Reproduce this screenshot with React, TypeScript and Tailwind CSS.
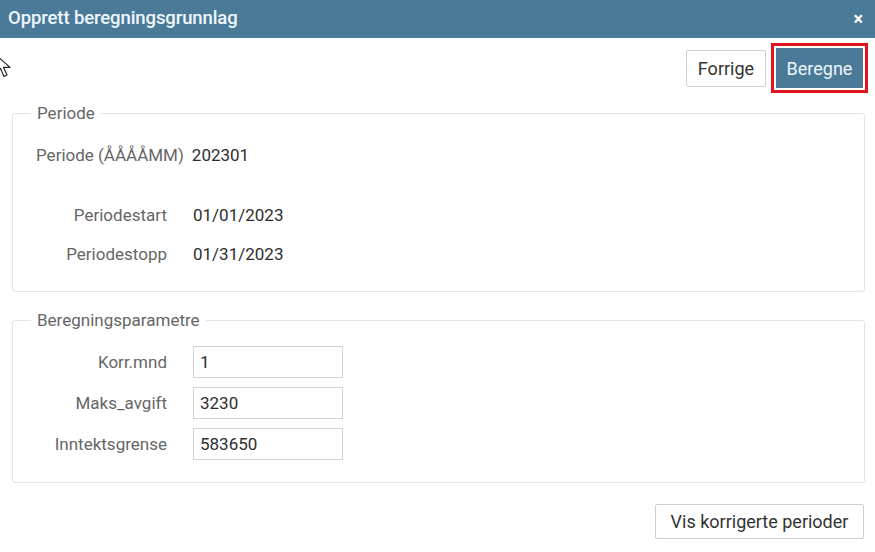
import React from "react";

const labelCls = "text-[17px] leading-[24px] text-[#666666]";
const valueCls = "text-[17px] leading-[24px] text-[#2e2e2e]";

function InputRow({ label, value }: { label: string; value: string }) {
  return (
    <div className="flex items-center">
      <div className={`w-[154px] text-right ${labelCls}`}>{label}</div>
      <div className="ml-[26px] w-[150px] h-[32px] border border-[#d4d4d4] bg-white flex items-center pl-[6px]">
        <span className={valueCls}>{value}</span>
      </div>
    </div>
  );
}

export default function App() {
  return (
    <div
      className="relative w-[875px] h-[552px] bg-white overflow-hidden"
      style={{ fontFamily: "Roboto, 'Liberation Sans', sans-serif" }}
    >
      {/* Title bar */}
      <div className="h-[38px] bg-[#4b7a99] flex items-center justify-between pl-[8px] pr-[12px]">
        <span className="text-[18.5px] font-medium text-[#eef7fc] tracking-[-0.1px]">Opprett beregningsgrunnlag</span>
        <span className="text-[18px] font-bold text-white leading-none">×</span>
      </div>

      {/* Cursor */}
      <svg className="absolute left-[-5px] top-[54px]" width="20" height="26" viewBox="0 0 20 26">
        <path d="M1 1 L1 19 L5.5 14.5 L9 22.5 L12 21 L8.6 13.4 L15 13.4 Z" fill="white" stroke="#222" strokeWidth="1.2" strokeLinejoin="round" />
      </svg>

      {/* Toolbar */}
      <div className="flex justify-end items-center mt-[5px] pr-[7px] gap-[5px]">
        <button className="h-[37px] w-[80px] bg-white border border-[#cfcfcf] rounded-[2px] text-[18px] text-[#333]">
          Forrige
        </button>
        <div className="border-[3px] border-[#e2141c] p-[2px]">
          <button className="h-[40px] w-[87px] bg-[#4b7a99] text-[18px] text-[#eef7fc]">
            Beregne
          </button>
        </div>
      </div>

      {/* Fieldset 1 */}
      <fieldset className="ml-[12px] mr-[10px] mt-[10px] border border-[#e4e4e4] rounded-[3px] pb-[25px]">
        <legend className="ml-[18px] px-[6px] text-[17px] leading-[20px] text-[#666666]">Periode</legend>
        <div className="pt-[20px] flex items-center">
          <div className={`pl-[23px] ${labelCls}`}>Periode (ÅÅÅÅMM)</div>
          <div className={`ml-[8px] ${valueCls}`}>202301</div>
        </div>
        <div className="mt-[36px] flex items-center">
          <div className={`w-[154px] text-right ${labelCls}`}>Periodestart</div>
          <div className={`ml-[26px] ${valueCls}`}>01/01/2023</div>
        </div>
        <div className="mt-[15px] flex items-center">
          <div className={`w-[154px] text-right ${labelCls}`}>Periodestopp</div>
          <div className={`ml-[26px] ${valueCls}`}>01/31/2023</div>
        </div>
      </fieldset>

      {/* Fieldset 2 */}
      <fieldset className="ml-[12px] mr-[10px] mt-[18px] border border-[#e4e4e4] rounded-[3px] pb-[22px]">
        <legend className="ml-[18px] px-[6px] text-[17px] leading-[20px] text-[#666666]">Beregningsparametre</legend>
        <div className="pt-[16px] flex flex-col gap-[9px]">
          <InputRow label="Korr.mnd" value="1" />
          <InputRow label="Maks_avgift" value="3230" />
          <InputRow label="Inntektsgrense" value="583650" />
        </div>
      </fieldset>

      {/* Bottom button */}
      <div className="flex justify-end mt-[21px] pr-[11px]">
        <button className="h-[35px] w-[209px] bg-white border border-[#cfcfcf] rounded-[2px] text-[18px] text-[#333]">
          Vis korrigerte perioder
        </button>
      </div>
    </div>
  );
}
